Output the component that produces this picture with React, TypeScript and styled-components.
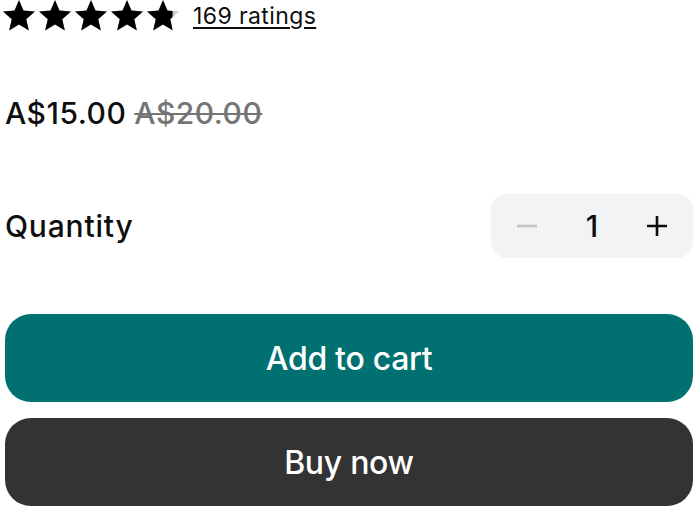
import React from 'react';
import styled, {createGlobalStyle} from 'styled-components';

const GlobalStyle = createGlobalStyle`
    html, body {
        margin: 0;
        padding: 0;
        background: #fff;
    }
    body {
        font-family: Inter, "Noto Sans", sans-serif;
        color: #0e0e0e;
    }
`;

const STAR_PATH = 'M12 17.27L18.18 21l-1.64-7.03L22 9.24l-7.19-.61L12 2 9.19 8.63 2 9.24l5.46 4.73L5.82 21z';

const Star = ({fill, id}: {fill: number; id: string}) => (
    <svg width="32" height="32" viewBox="2 2 20 20" style={{overflow: 'visible'}}>
        <defs>
            <clipPath id={id}>
                <rect x="2" y="0" width={20 * fill} height="24"/>
            </clipPath>
        </defs>
        <path d={STAR_PATH} fill="#cfcfcf"/>
        <path d={STAR_PATH} fill="#000" clipPath={`url(#${id})`}/>
    </svg>
);

export default function App() {
    const rating = 4.8;
    const [qty, setQty] = React.useState(1);

    return (
        <>
            <GlobalStyle/>
            <Page>
                <RatingRow>
                    <Stars>
                        {[0, 1, 2, 3, 4].map(i => (
                            <Star key={i} id={`star-${i}`} fill={Math.max(0, Math.min(1, rating - i))}/>
                        ))}
                    </Stars>
                    <RatingsLink href="#">169 ratings</RatingsLink>
                </RatingRow>

                <PriceRow>
                    <Price>A$15.00</Price>
                    <OldPrice>A$20.00</OldPrice>
                </PriceRow>

                <QuantityRow>
                    <Label>Quantity</Label>
                    <Stepper>
                        <StepButton disabled={qty <= 1} onClick={() => setQty(q => Math.max(1, q - 1))}>
                            <svg width="22" height="22" viewBox="0 0 22 22">
                                <path d="M1 11h20" stroke="currentColor" strokeWidth="2.6"/>
                            </svg>
                        </StepButton>
                        <Count>{qty}</Count>
                        <StepButton onClick={() => setQty(q => q + 1)}>
                            <svg width="22" height="22" viewBox="0 0 22 22">
                                <path d="M1 11h20M11 1v20" stroke="currentColor" strokeWidth="2.6"/>
                            </svg>
                        </StepButton>
                    </Stepper>
                </QuantityRow>

                <Actions>
                    <ActionButton $variant="primary">Add to cart</ActionButton>
                    <ActionButton $variant="dark">Buy now</ActionButton>
                </Actions>
            </Page>
        </>
    );
}

const Page = styled.div`
    padding: 0 7px 0 5px;
    display: flex;
    flex-direction: column;
`;

const RatingRow = styled.div`
    display: flex;
    align-items: center;
    gap: 14px;
    height: 32px;
`;

const Stars = styled.div`
    display: flex;
    align-items: center;
    gap: 4px;
    margin-left: -2px;
    margin-top: -1px;
`;

const RatingsLink = styled.a`
    color: #0e0e0e;
    font-size: 23px;
    letter-spacing: 0.4px;
    text-decoration: underline;
    text-decoration-thickness: 1.5px;
    text-underline-offset: 3px;
`;

const PriceRow = styled.div`
    display: flex;
    align-items: baseline;
    gap: 8px;
    margin-top: 63px;
`;

const Price = styled.span`
    font-size: 30px;
    font-weight: 500;
    letter-spacing: 0.5px;
`;

const OldPrice = styled(Price)`
    color: #757575;
    text-decoration: line-through;
    text-decoration-thickness: 2px;
`;

const QuantityRow = styled.div`
    display: flex;
    align-items: center;
    justify-content: space-between;
    margin-top: 63px;
`;

const Label = styled.span`
    font-size: 30px;
    font-weight: 500;
    letter-spacing: 0.8px;
`;

const Stepper = styled.div`
    display: flex;
    align-items: center;
    justify-content: space-between;
    width: 202px;
    height: 64px;
    box-sizing: border-box;
    padding: 0 20px;
    border-radius: 16px;
    background: #f2f3f5;
`;

const StepButton = styled.button`
    border: none;
    background: none;
    padding: 5px;
    display: flex;
    color: #0e0e0e;
    cursor: pointer;

    &:disabled {
        color: #c4c4c4;
        cursor: default;
    }
`;

const Count = styled.span`
    font-size: 30px;
    font-weight: 500;
`;

const Actions = styled.div`
    display: flex;
    flex-direction: column;
    gap: 16px;
    margin-top: 56px;
`;

const ActionButton = styled.button<{$variant: 'primary' | 'dark'}>`
    height: 88px;
    border: none;
    border-radius: 26px;
    font-family: Inter, "Noto Sans", sans-serif;
    font-size: 32px;
    font-weight: 500;
    letter-spacing: -0.3px;
    color: #fff;
    background: ${p => p.$variant === 'primary' ? '#007170' : '#333333'};
    cursor: pointer;
`;
